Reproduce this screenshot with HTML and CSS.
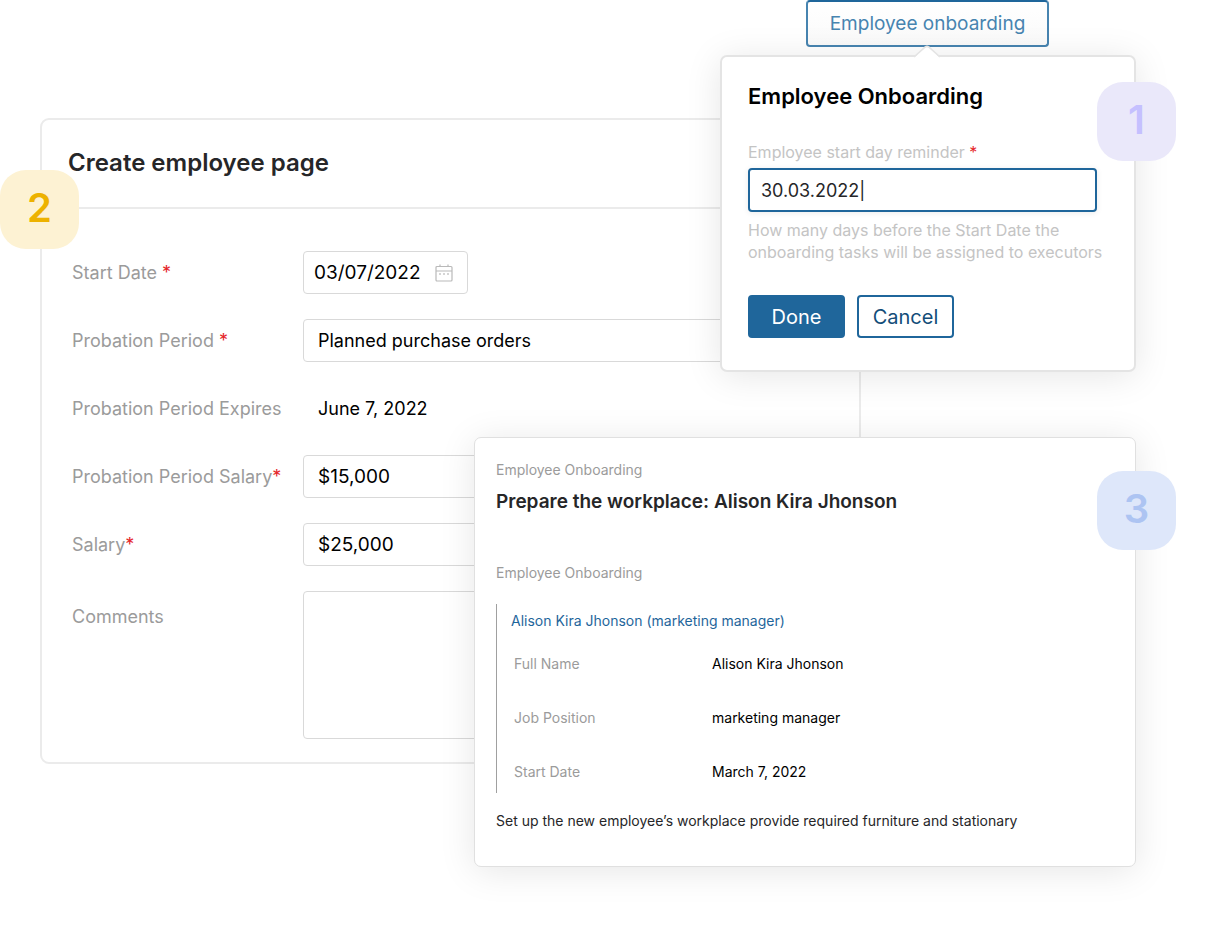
FILE: index.html
```html
<!DOCTYPE html>
<html lang="en">
<head>
<meta charset="utf-8">
<title>Employee onboarding</title>
<link rel="stylesheet" href="styles.css">
</head>
<body>
<main class="stage">
  <section class="form-card">
    <span class="badge badge-two">2</span>
    <header class="form-header"><h1 class="form-title">Create employee page</h1></header>
    <form class="form-grid">
      <label class="form-label" for="start">Start Date <span class="req">*</span></label>
      <div class="date-field">
        <input class="date-input" id="start" type="text" value="03/07/2022">
        <svg class="date-icon" viewBox="0 0 18 18" fill="none" stroke="#b9b9b9">
          <rect x="1" y="2.5" width="16" height="14.5" rx="1" stroke-width="1.2"/>
          <path d="M1 7h16M5 .5v2M13 .5v2" stroke-width="1.2"/>
          <path d="M4.2 10h1.6M8.2 10h1.6M12.2 10h1.6" stroke-width="1.4"/>
        </svg>
      </div>
      <label class="form-label" for="period">Probation Period <span class="req">*</span></label>
      <input class="field" id="period" type="text" value="Planned purchase orders">
      <label class="form-label" for="expires">Probation Period Expires</label>
      <output class="field-value" id="expires">June 7, 2022</output>
      <label class="form-label" for="psalary">Probation Period Salary<span class="req">*</span></label>
      <input class="field field-amount" id="psalary" type="text" value="$15,000">
      <label class="form-label" for="salary">Salary<span class="req">*</span></label>
      <input class="field field-amount" id="salary" type="text" value="$25,000">
      <label class="form-label label-top" for="comments">Comments</label>
      <textarea class="field field-area" id="comments"></textarea>
    </form>
  </section>

  <button class="trigger" type="button">Employee onboarding</button>

  <section class="popover">
    <svg class="popover-arrow" viewBox="0 0 26 13"><path d="M0 13 L11 2.2 Q13 .6 15 2.2 L26 13Z" fill="#fff"/><path d="M0 12 L11 2.2 Q13 .6 15 2.2 L26 12" fill="none" stroke="#e4e4e4" stroke-width="1.6"/></svg>
    <span class="badge badge-one">1</span>
    <h2 class="popover-title">Employee Onboarding</h2>
    <label class="popover-label" for="reminder">Employee start day reminder <span class="req">*</span></label>
    <input class="popover-input" id="reminder" type="text" value="30.03.2022|">
    <p class="popover-help">How many days before the Start Date the<br>onboarding tasks will be assigned to executors</p>
    <div class="actions">
      <button class="btn btn-primary" type="button">Done</button>
      <button class="btn" type="button">Cancel</button>
    </div>
  </section>

  <section class="task-card">
    <span class="badge badge-three">3</span>
    <p class="caption">Employee Onboarding</p>
    <h2 class="task-title">Prepare the workplace: Alison Kira Jhonson</h2>
    <p class="caption">Employee Onboarding</p>
    <div class="details">
      <a class="person" href="#">Alison Kira Jhonson (marketing manager)</a>
      <dl class="facts">
        <dt>Full Name</dt><dd>Alison Kira Jhonson</dd>
        <dt>Job Position</dt><dd>marketing manager</dd>
        <dt>Start Date</dt><dd>March 7, 2022</dd>
      </dl>
    </div>
    <p class="note">Set up the new employee’s workplace provide required furniture and stationary</p>
  </section>
</main>
</body>
</html>
```
FILE: styles.css
```css
* { box-sizing: border-box; }
body { margin: 0; background: #fff; color: #000; font-family: Inter, "Liberation Sans", sans-serif; }
h1, h2, p, dl, dd { margin: 0; }
input, textarea, button { font-family: inherit; margin: 0; }
.stage { position: relative; min-width: 1100px; padding: 118px 347px 179px 40px; }

.form-card { position: relative; border: 2px solid #ebebeb; border-radius: 9px; }
.form-header { padding: 26px 26px 27px; border-bottom: 2px solid #ebebeb; }
.form-title { font-size: 24px; line-height: 34px; font-weight: 600; color: #262628; }
.form-grid { display: grid; grid-template-columns: 231px 1fr; gap: 25px 0; padding: 42px 26px 23px 30px; align-items: center; }
.form-label { font-size: 18px; line-height: 24px; color: #9b9b9b; white-space: nowrap; }
.label-top { align-self: start; padding-top: 14px; }
.req { color: #e5252a; }
.field, .date-field { height: 43px; border: 1px solid #d9d9d9; border-radius: 4px; background: #fff; }
.field { width: 100%; padding: 0 14px; font-size: 18px; color: #000; }
.field-amount { font-size: 19px; }
.field-area { display: block; height: 148px; resize: none; }
.field-value { height: 43px; padding-left: 15px; font-size: 18px; line-height: 43px; }
.date-field { display: flex; align-items: center; justify-content: space-between; width: 165px; padding: 0 14px 0 10px; }
.date-input { width: 114px; padding: 0; border: 0; font-size: 19px; background: none; }
.date-icon { width: 18px; height: 18px; flex: none; }

.trigger { position: absolute; top: 0; right: 159px; width: 243px; height: 47px; padding: 0; border: 2px solid #4784b0; border-top-color: #1f669b; border-radius: 4px; background: linear-gradient(#fff, #fafafa); color: #4784b0; font-size: 19px; }

.popover { position: absolute; top: 55px; right: 72px; width: 416px; padding: 25px 37px 32px 26px; border: 2px solid #e4e4e4; border-radius: 7px; background: #fff; box-shadow: 0 4px 36px rgba(0, 0, 0, 0.1); }
.popover-arrow { position: absolute; top: -12px; left: 192px; width: 26px; height: 13px; }
.popover-title { font-size: 22px; line-height: 28px; font-weight: 600; }
.popover-label { display: block; margin-top: 31px; font-size: 16px; line-height: 22px; color: #c4c4c4; }
.popover-input { display: block; width: 100%; height: 44px; margin-top: 5px; padding: 0 11px; border: 2px solid #1f669b; border-radius: 4px; background: #fff; color: #262628; font-size: 18px; box-shadow: 0 1px 6px rgba(0, 0, 0, 0.08); }
.popover-help { margin-top: 7px; font-size: 16px; line-height: 22px; color: #c4c4c4; white-space: nowrap; }
.actions { display: flex; gap: 12px; margin-top: 32px; }
.btn { width: 97px; height: 43px; padding: 0; border: 2px solid #1f669b; border-radius: 4px; background: #fff; color: #134d79; font-size: 20px; }
.btn-primary { background: #1f669b; color: #fff; }

.task-card { position: absolute; top: 437px; left: 474px; right: 72px; padding: 22px 21px 35px; border: 1px solid #e0e0e0; border-radius: 7px; background: #fff; box-shadow: 0 4px 36px rgba(0, 0, 0, 0.1); }
.caption { font-size: 14px; line-height: 20px; color: #9b9b9b; }
.task-title { margin: 8px 0 47px; font-size: 19px; line-height: 28px; font-weight: 600; color: #262628; }
.details { margin-top: 21px; padding: 7px 0 11px 14px; border-left: 1px solid #a0a0a0; }
.person { display: block; font-size: 14px; line-height: 20px; color: #1f669b; text-decoration: none; }
.facts { display: grid; grid-template-columns: 198px 1fr; row-gap: 34px; margin-top: 23px; padding-left: 3px; font-size: 14px; line-height: 20px; }
.facts dt { color: #9b9b9b; }
.note { margin-top: 18px; font-size: 14px; line-height: 20px; color: #262628; }

.badge { position: absolute; display: flex; align-items: center; justify-content: center; width: 79px; height: 79px; padding-bottom: 3px; border-radius: 26px; font-size: 40px; line-height: 48px; font-weight: 600; }
.badge-one { top: 25px; right: -42px; background: #eae8fa; color: #c5c0ff; }
.badge-two { top: 50px; left: -42px; background: #fdf2d3; color: #edb200; }
.badge-three { top: 33px; right: -41px; background: #dee7fa; color: #adc4f2; }
```
